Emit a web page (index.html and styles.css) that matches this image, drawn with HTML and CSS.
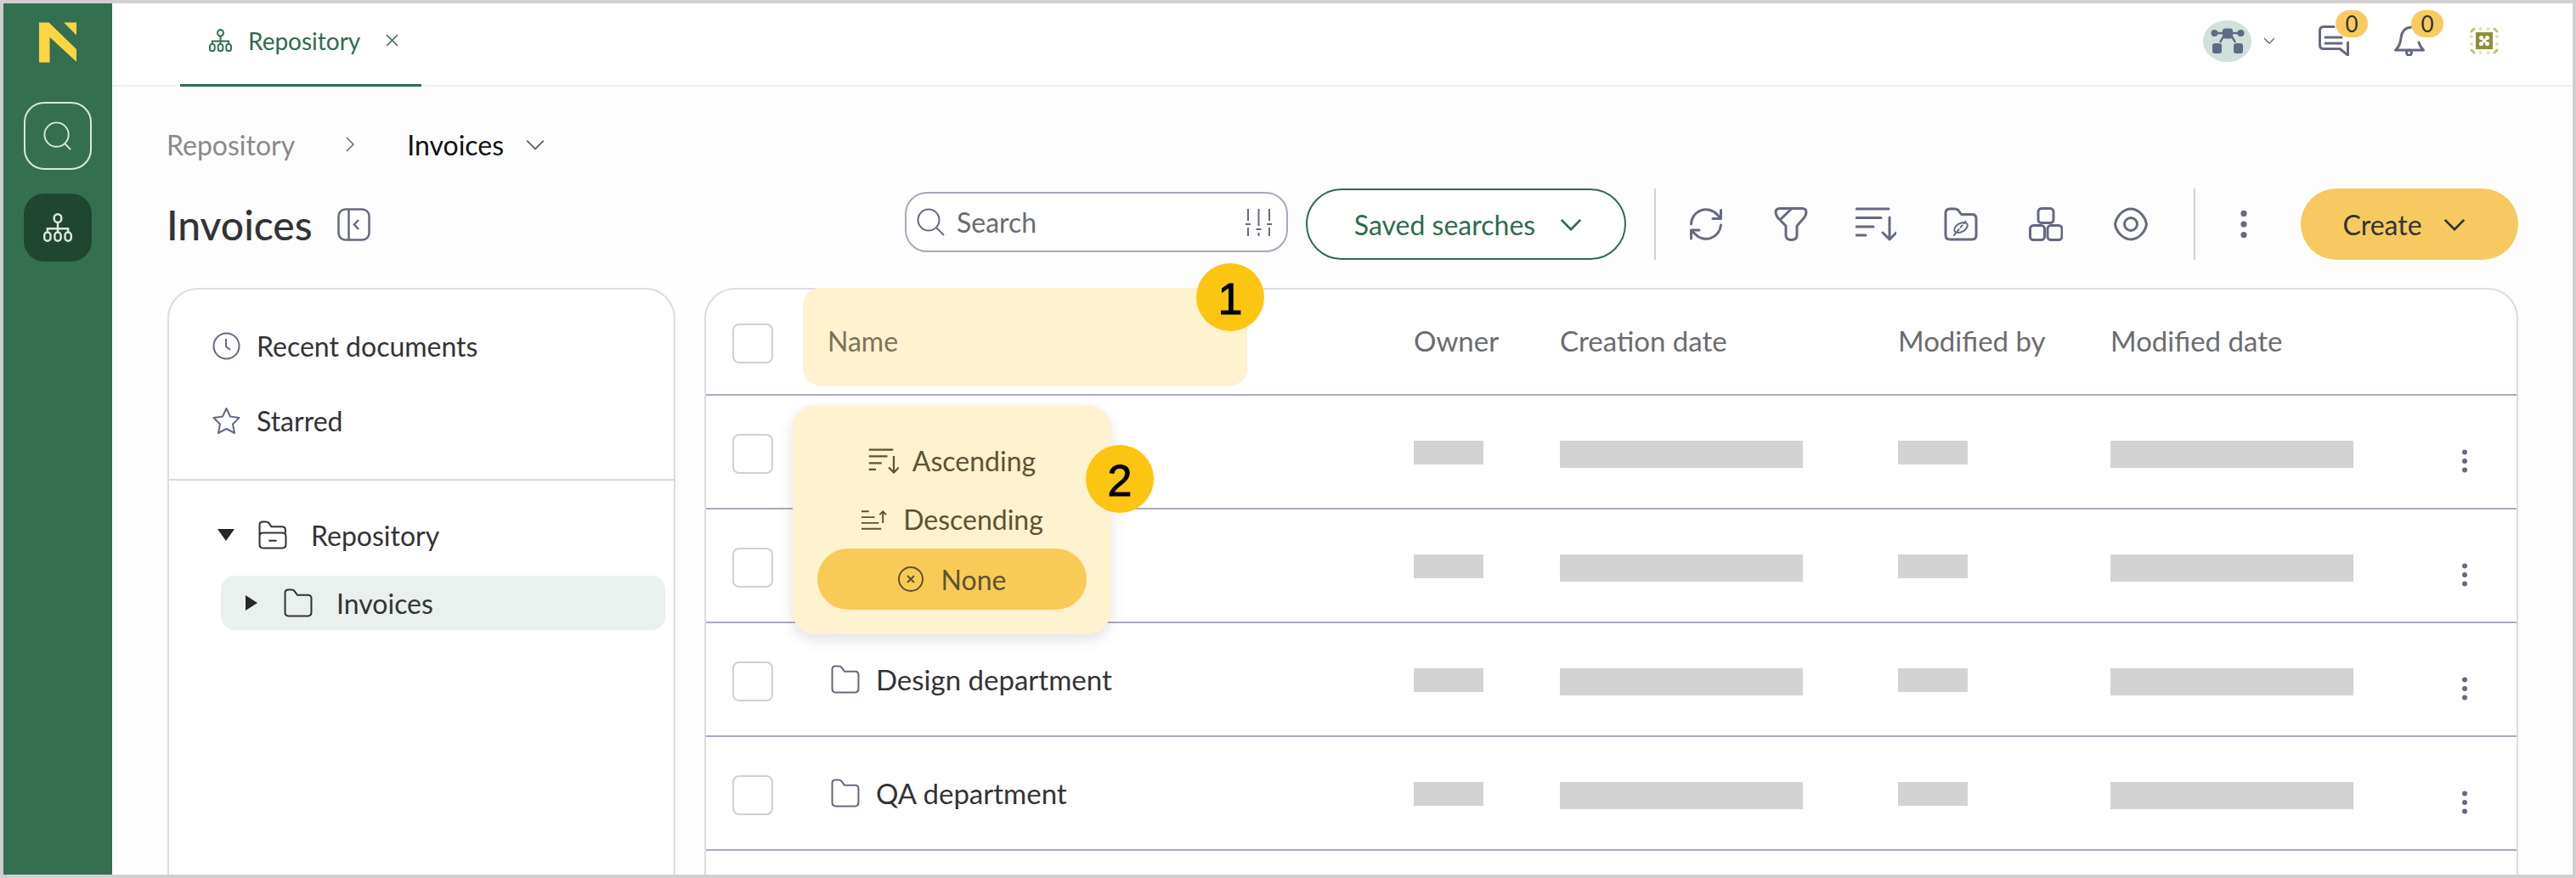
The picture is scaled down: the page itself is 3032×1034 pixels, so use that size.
FILE: index.html
```html
<!DOCTYPE html>
<html lang="en">
<head>
    <meta charset="UTF-8">
    <meta name="viewport" content="width=device-width, initial-scale=1.0">
    <title>Invoices</title>
    <link rel="stylesheet" href="styles.css">
</head>
<body>
    <svg class="sprite" aria-hidden="true">
        <symbol id="i-org" viewBox="0 0 28 28">
            <rect x="10.5" y="1" width="7" height="8" rx="3.5"/>
            <path d="M14 9V18M4 18V15H24V18"/>
            <rect x="1" y="18.5" width="6" height="8.5" rx="3"/>
            <rect x="11" y="18.5" width="6" height="8.5" rx="3"/>
            <rect x="21" y="18.5" width="6" height="8.5" rx="3"/>
        </symbol>
        <symbol id="i-chev" viewBox="0 0 28 16">
            <path d="M2 2L14 14L26 2"/>
        </symbol>
        <symbol id="i-folder" viewBox="0 0 33 33">
            <path d="M1.5 5Q1.5 1.500 5 1.500H9Q11.500 1.500 13 4L15.500 7.500H27.500Q31.500 7.500 31.500 11.500V27.500Q31.500 31.500 27.500 31.500H5.500Q1.500 31.500 1.500 27.500Z"/>
        </symbol>
        <symbol id="i-kebab" viewBox="0 0 8 28">
            <circle cx="4" cy="3.500" r="3"/>
            <circle cx="4" cy="14" r="3"/>
            <circle cx="4" cy="24.500" r="3"/>
        </symbol>
        <symbol id="i-sort" viewBox="0 0 48 40">
            <path d="M1 2H39M1 12.500H30M1 23H21M1 33H12M40 12V38M32 30L40 38L48 30"/>
        </symbol>
    </svg>

    <div class="app">
        <nav class="rail">
            <svg class="rail-logo" viewBox="47 30 133 142">
                <path d="M47 30H82L180 125V170L85 82V172H47Z"/>
                <path d="M135 30H180V75Z"/>
            </svg>
            <div class="rail-btn rail-search">
                <svg class="rail-icon" viewBox="0 0 36 36"><circle cx="16.500" cy="16.500" r="15"/><path d="M27 28L34 35"/></svg>
            </div>
            <div class="rail-btn rail-active">
                <svg class="rail-icon"><use href="#i-org"/></svg>
            </div>
        </nav>

        <div class="main">
            <header class="topbar">
                <div class="tab">
                    <svg class="tab-icon"><use href="#i-org"/></svg>
                    <span class="tab-label">Repository</span>
                    <svg class="tab-close" viewBox="0 0 15 15"><path d="M1 1L14 14M14 1L1 14"/></svg>
                </div>
                <div class="top-actions">
                    <div class="avatar">
                        <svg class="avatar-icon" viewBox="0 0 40 30">
                            <path class="avatar-line" d="M6 6H14M34 6H26M11 17L15 10M29 17L25 10"/>
                            <circle cx="4.500" cy="6" r="4"/>
                            <circle cx="35.500" cy="6" r="4"/>
                            <rect x="14" y="0.500" width="12" height="12" rx="3"/>
                            <rect x="2" y="18" width="11" height="12" rx="3"/>
                            <rect x="27" y="18" width="11" height="12" rx="3"/>
                        </svg>
                    </div>
                    <svg class="avatar-chev"><use href="#i-chev"/></svg>
                    <div class="notify notify-chat">
                        <svg class="notify-icon" viewBox="0 0 36 36">
                            <path d="M18 1.500H6Q1.500 1.500 1.500 6V23Q1.500 27.500 6 27.500H25L34.500 35V20"/>
                            <path d="M8 14H27M8 21H27"/>
                        </svg>
                        <span class="count">0</span>
                    </div>
                    <div class="notify notify-bell">
                        <svg class="notify-icon" viewBox="0 0 36 36">
                            <path d="M20 2Q9 3 8 15Q7 24 1.500 29H34.500Q30.500 25 29 20"/>
                            <circle cx="17.500" cy="32" r="3"/>
                        </svg>
                        <span class="count">0</span>
                    </div>
                    <svg class="apps-icon" viewBox="0 0 34 32">
                        <g class="apps-dots">
                            <circle cx="12.500" cy="2" r="2"/><circle cx="21.500" cy="2" r="2"/>
                            <circle cx="12.500" cy="30" r="2"/><circle cx="21.500" cy="30" r="2"/>
                            <circle cx="2" cy="11" r="2"/><circle cx="2" cy="20" r="2"/>
                            <circle cx="32" cy="11" r="2"/><circle cx="32" cy="20" r="2"/>
                        </g>
                        <path class="apps-corners" d="M2 5L5 2M29 2L32 5M2 27L5 30M29 30L32 27"/>
                        <rect class="apps-core" x="7" y="6" width="20" height="20"/>
                        <g class="apps-cut">
                            <circle cx="13.500" cy="12.500" r="2.500"/><circle cx="20.500" cy="12.500" r="2.500"/>
                            <circle cx="13.500" cy="19.500" r="2.500"/><circle cx="20.500" cy="19.500" r="2.500"/>
                            <circle cx="17" cy="16" r="2.500"/>
                        </g>
                    </svg>
                </div>
            </header>

            <div class="crumbs">
                <span class="crumb-parent">Repository</span>
                <svg class="crumb-sep" viewBox="0 0 10 18"><path d="M1 1L9 9L1 17"/></svg>
                <span class="crumb-current">Invoices</span>
                <svg class="crumb-chev"><use href="#i-chev"/></svg>
            </div>

            <div class="title-row">
                <h1>Invoices</h1>
                <svg class="collapse-icon" viewBox="0 0 39 39">
                    <rect x="1.500" y="1.500" width="36" height="36" rx="8"/>
                    <path d="M13.500 1.500V37.500M25 14L20 19.500L25 25"/>
                </svg>

                <div class="toolbar">
                    <div class="search-box">
                        <svg class="search-icon" viewBox="0 0 33 33"><circle cx="14" cy="14" r="12.500"/><path d="M23 23L32 32"/></svg>
                        <span class="search-text">Search</span>
                        <svg class="search-tune" viewBox="0 0 31 32">
                            <path d="M3 0V14M3 22V32M15.500 0V20M15.500 28V32M28 0V14M28 22V32M0 18H6M12.500 24H18.500M25 18H31"/>
                        </svg>
                    </div>
                    <button class="btn btn-outline">Saved searches<svg class="btn-chev"><use href="#i-chev"/></svg></button>
                    <span class="vsep vsep-first"></span>
                    <span class="tool">
                        <svg class="tool-svg" viewBox="0 0 40 40">
                            <path d="M2.500 20A17.500 17.500 0 0 1 33 8.500L37.500 13.500M37.500 3.500V13.500H28M37.500 21A17.500 17.500 0 0 1 7 31.500L2.500 27M2.500 37V27H12"/>
                        </svg>
                    </span>
                    <span class="tool">
                        <svg class="tool-svg" viewBox="0 0 40 40">
                            <path d="M7 1.500H33Q38 1.500 38 6Q38 9 35 13L27 22V33Q27 38.500 20.500 38.500Q14 38.500 14 33V22L5 13Q2 9 2 6Q2 1.500 7 1.500ZM21 1.500L7 15"/>
                        </svg>
                    </span>
                    <span class="tool">
                        <svg class="tool-svg tool-sort"><use href="#i-sort"/></svg>
                    </span>
                    <span class="tool">
                        <svg class="tool-svg" viewBox="0 0 40 40">
                            <path d="M2 7Q2 2 7 2H13Q16 2 18 5L20.500 8.500H33Q38 8.500 38 13.500V33Q38 38 33 38H7Q2 38 2 33Z"/>
                            <ellipse class="thin" cx="20" cy="24" rx="8.500" ry="5" transform="rotate(-30 20 24)"/>
                            <path class="thin dotted" d="M12 33L27 15"/>
                        </svg>
                    </span>
                    <span class="tool">
                        <svg class="tool-svg" viewBox="0 0 40 40">
                            <rect x="11" y="1.500" width="18" height="17" rx="4"/>
                            <rect x="1.500" y="21.500" width="17" height="17" rx="4"/>
                            <rect x="22" y="21.500" width="17" height="17" rx="4"/>
                        </svg>
                    </span>
                    <span class="tool">
                        <svg class="tool-svg" viewBox="0 0 40 40">
                            <path d="M1.500 20Q2.500 13 8 7.500Q14 2 20 2Q26 2 32 7.500Q37.500 13 38.500 20Q37.500 27 32 32.500Q26 38 20 38Q14 38 8 32.500Q2.500 27 1.500 20Z"/>
                            <circle cx="20" cy="20" r="7.500"/>
                        </svg>
                    </span>
                    <span class="vsep vsep-second"></span>
                    <svg class="tool-kebab"><use href="#i-kebab"/></svg>
                    <button class="btn btn-create">Create<svg class="btn-chev"><use href="#i-chev"/></svg></button>
                </div>
            </div>

            <div class="content">
                <aside class="tree">
                    <div class="tree-top">
                        <div class="tree-link">
                            <svg class="tree-link-icon" viewBox="0 0 33 33"><circle cx="16.500" cy="16.500" r="15"/><path d="M16 8V17L21 21"/></svg>
                            Recent documents
                        </div>
                        <div class="tree-link">
                            <svg class="tree-link-icon" viewBox="0 0 33 33"><path d="M16.500 2L21 11.500L31.500 13L24 20.500L26 31L16.500 26L7 31L9 20.500L1.500 13L12 11.500Z"/></svg>
                            Starred
                        </div>
                    </div>
                    <div class="tree-body">
                        <div class="node node-root">
                            <span class="caret-down"></span>
                            <svg class="node-icon" viewBox="0 0 33 33">
                                <path d="M1.500 27.500V5Q1.500 1.500 5 1.500H9Q11.500 1.500 13 4L15 7H27Q31 7 31 11V14M1.500 18Q1.500 14 5.500 14H27.500Q31.500 14 31.500 18V27.500Q31.500 31.500 27.500 31.500H5.500Q1.500 31.500 1.500 27.500ZM12 23H21"/>
                            </svg>
                            Repository
                        </div>
                        <div class="node node-current">
                            <span class="caret-right"></span>
                            <svg class="node-icon"><use href="#i-folder"/></svg>
                            Invoices
                        </div>
                    </div>
                </aside>

                <section class="table">
                    <div class="row row-head">
                        <span class="check"></span>
                        <span></span>
                        <span class="head-cell">Owner</span>
                        <span class="head-cell">Creation date</span>
                        <span class="head-cell">Modified by</span>
                        <span class="head-cell">Modified date</span>
                    </div>
                    <div class="row">
                        <span class="check"></span>
                        <span></span>
                        <span class="skel skel-short"></span>
                        <span class="skel skel-long"></span>
                        <span class="skel skel-short"></span>
                        <span class="skel skel-long"></span>
                        <svg class="row-menu"><use href="#i-kebab"/></svg>
                    </div>
                    <div class="row">
                        <span class="check"></span>
                        <span></span>
                        <span class="skel skel-short"></span>
                        <span class="skel skel-long"></span>
                        <span class="skel skel-short"></span>
                        <span class="skel skel-long"></span>
                        <svg class="row-menu"><use href="#i-kebab"/></svg>
                    </div>
                    <div class="row">
                        <span class="check"></span>
                        <span class="file"><svg class="file-icon"><use href="#i-folder"/></svg>Design department</span>
                        <span class="skel skel-short"></span>
                        <span class="skel skel-long"></span>
                        <span class="skel skel-short"></span>
                        <span class="skel skel-long"></span>
                        <svg class="row-menu"><use href="#i-kebab"/></svg>
                    </div>
                    <div class="row">
                        <span class="check"></span>
                        <span class="file"><svg class="file-icon"><use href="#i-folder"/></svg>QA department</span>
                        <span class="skel skel-short"></span>
                        <span class="skel skel-long"></span>
                        <span class="skel skel-short"></span>
                        <span class="skel skel-long"></span>
                        <svg class="row-menu"><use href="#i-kebab"/></svg>
                    </div>

                    <div class="name-highlight">Name</div>
                    <span class="step step-one">1</span>

                    <div class="sort-menu">
                        <div class="sort-item">
                            <svg class="sort-up-icon"><use href="#i-sort"/></svg>
                            Ascending
                        </div>
                        <div class="sort-item">
                            <svg class="sort-down-icon" viewBox="0 0 32 24">
                                <path d="M1 2H10M1 9H17M1 16H22M1 23H25M27 16V2M23 6L27 2L31 6"/>
                            </svg>
                            Descending
                        </div>
                        <div class="sort-item sort-none">
                            <svg class="sort-none-icon" viewBox="0 0 30 30"><circle cx="15" cy="15" r="14"/><path d="M11 11L19 19M19 11L11 19"/></svg>
                            None
                        </div>
                    </div>
                    <span class="step step-two">2</span>
                </section>
            </div>
        </div>
    </div>
</body>
</html>
```

FILE: styles.css
```css
* {
    box-sizing: border-box;
}

html, body {
    margin: 0;
    height: 100%;
}

body {
    font-family: Lato, "Open Sans", sans-serif;
    color: #333336;
    overflow: hidden;
}

svg {
    display: block;
    flex: none;
}

.sprite {
    display: none;
}

.app {
    display: flex;
    height: 1034px;
    border: 4px solid #d0d0d0;
    overflow: hidden;
    background-color: #fdfdfd;
}

/* left rail */
.rail {
    flex: none;
    width: 128px;
    background-color: #356f52;
    display: flex;
    flex-direction: column;
    align-items: center;
    padding-top: 22px;
}

.rail-logo {
    width: 44px;
    height: 48px;
    margin-bottom: 46px;
    fill: #fbd540;
}

.rail-btn {
    width: 80px;
    height: 80px;
    border-radius: 24px;
    display: flex;
    justify-content: center;
    align-items: center;
    margin-bottom: 28px;
}

.rail-search {
    border: 2px solid #dbe8e1;
}

.rail-active {
    background-color: #1f4630;
}

.rail-icon {
    width: 34px;
    height: 34px;
    fill: none;
    stroke: #dbe8e1;
    stroke-width: 2;
}

/* top bar */
.main {
    flex: 1;
    min-width: 0;
    display: flex;
    flex-direction: column;
}

.topbar {
    flex: none;
    height: 98px;
    background-color: #fff;
    border-bottom: 2px solid #efeff1;
    display: flex;
    padding-left: 80px;
}

.tab {
    width: 284px;
    height: 98px;
    padding: 0 0 8px 34px;
    display: flex;
    align-items: center;
    border-bottom: 3px solid #2f6b50;
    color: #2f6b50;
    font-size: 28px;
}

.tab-icon {
    width: 27px;
    height: 27px;
    fill: none;
    stroke: #2f6b50;
    stroke-width: 2;
    margin-right: 19px;
}

.tab-close {
    width: 15px;
    height: 15px;
    margin-left: 30px;
    fill: none;
    stroke: #2f6b50;
    stroke-width: 1.500;
}

.top-actions {
    margin-left: auto;
    display: flex;
    align-items: center;
    padding: 0 87px 8px 0;
}

.avatar {
    width: 57px;
    height: 49px;
    border-radius: 50%;
    background-color: #d2e0db;
    display: flex;
    justify-content: center;
    align-items: center;
}

.avatar-icon {
    width: 40px;
    height: 30px;
    fill: #5f6b85;
}

.avatar-line {
    fill: none;
    stroke: #5f6b85;
    stroke-width: 2.500;
}

.avatar-chev {
    width: 14px;
    height: 8px;
    margin: 0 51px 0 14px;
    fill: none;
    stroke: #5f6270;
    stroke-width: 2.500;
    overflow: visible;
}

.notify {
    position: relative;
    width: 36px;
    height: 36px;
}

.notify-bell {
    margin: 0 53px;
}

.notify-icon {
    width: 36px;
    height: 36px;
    fill: none;
    stroke: #666a80;
    stroke-width: 3;
    stroke-linecap: round;
    stroke-linejoin: round;
}

.count {
    position: absolute;
    top: -18px;
    left: 20px;
    width: 38px;
    height: 32px;
    border-radius: 16px;
    background-color: #f9cb5f;
    color: #333;
    font-size: 26px;
    line-height: 32px;
    text-align: center;
}

.apps-icon {
    width: 34px;
    height: 32px;
}

.apps-dots {
    fill: #e0e4b4;
}

.apps-corners {
    fill: none;
    stroke: #bcc56f;
    stroke-width: 3;
    stroke-linecap: round;
}

.apps-core {
    fill: #8e8f3c;
}

.apps-cut {
    fill: #fff;
}

/* breadcrumb */
.crumbs {
    flex: none;
    height: 36px;
    margin: 50px 0 34px;
    padding-left: 64px;
    display: flex;
    align-items: center;
    font-size: 32px;
}

.crumb-parent {
    color: #8a8a8c;
}

.crumb-sep {
    width: 10px;
    height: 18px;
    margin: 0 62px 0 60px;
    fill: none;
    stroke: #5f6270;
    stroke-width: 1.500;
}

.crumb-current {
    color: #111;
}

.crumb-chev {
    width: 24px;
    height: 13px;
    margin-left: 25px;
    fill: none;
    stroke: #5f6270;
    stroke-width: 2.500;
}

/* title and toolbar */
.title-row {
    flex: none;
    height: 84px;
    margin-bottom: 33px;
    padding: 0 64px 0 64px;
    display: flex;
    align-items: center;
}

h1 {
    margin: 0;
    font-size: 48px;
    font-weight: 500;
    color: #333336;
}

.collapse-icon {
    width: 39px;
    height: 39px;
    margin-left: 29px;
    fill: none;
    stroke: #666a80;
    stroke-width: 2.500;
}

.toolbar {
    margin-left: auto;
    display: flex;
    align-items: center;
}

.search-box {
    width: 451px;
    height: 71px;
    margin: 0 21px 5px 0;
    padding: 0 17px 0 12px;
    display: flex;
    align-items: center;
    border: 2px solid #a9a9bc;
    border-radius: 26px;
    background-color: #fff;
    font-size: 32px;
    color: #6c6c70;
}

.search-icon {
    width: 33px;
    height: 33px;
    margin-right: 14px;
    fill: none;
    stroke: #666a80;
    stroke-width: 2;
}

.search-tune {
    width: 31px;
    height: 32px;
    margin-left: auto;
    fill: none;
    stroke: #666a80;
    stroke-width: 2;
}

.btn {
    height: 84px;
    border-radius: 42px;
    display: flex;
    align-items: center;
    justify-content: center;
    font-family: inherit;
    font-size: 32px;
    cursor: pointer;
}

.btn-chev {
    width: 28px;
    height: 15px;
    margin-left: 28px;
    fill: none;
    stroke: currentColor;
    stroke-width: 3;
}

.btn-outline {
    width: 377px;
    padding-left: 12px;
    border: 2px solid #2f6b50;
    background-color: #fff;
    color: #2f6b50;
}

.btn-create {
    width: 256px;
    padding-right: 18px;
    border: none;
    background-color: #f6ca60;
    color: #333;
}

.btn-create .btn-chev {
    margin-left: 24px;
}

.vsep {
    width: 2px;
    height: 84px;
    background-color: #d0d0d4;
}

.vsep-first {
    margin: 0 9px 0 33px;
}

.vsep-second {
    margin-left: 24px;
}

.tool {
    width: 100px;
    display: flex;
    justify-content: center;
}

.tool-svg {
    width: 40px;
    height: 40px;
    fill: none;
    stroke: #666a80;
    stroke-width: 3;
    stroke-linecap: round;
    stroke-linejoin: round;
}

.tool-sort {
    width: 48px;
}

.thin {
    stroke-width: 2;
}

.dotted {
    stroke-dasharray: 3 3;
}

.tool-kebab {
    width: 8px;
    height: 28px;
    margin: 0 63px 0 53px;
    fill: #666a80;
    transform: scale(1.200);
}

/* panels */
.content {
    flex: 1;
    min-height: 0;
    padding: 0 64px 0 65px;
    display: flex;
    gap: 34px;
}

.tree {
    flex: none;
    width: 598px;
    height: 760px;
    background-color: #fff;
    border: 2px solid #dcdce2;
    border-radius: 36px;
    font-size: 32px;
}

.tree-top {
    height: 225px;
    padding-top: 22px;
    border-bottom: 2px solid #d8d8de;
}

.tree-link {
    height: 88px;
    padding-left: 51px;
    display: flex;
    align-items: center;
}

.tree-link-icon {
    width: 33px;
    height: 33px;
    margin-right: 19px;
    fill: none;
    stroke: #666a80;
    stroke-width: 2;
    stroke-linejoin: round;
}

.tree-body {
    padding: 32px 10px 0 61px;
}

.node {
    height: 64px;
    display: flex;
    align-items: center;
}

.node-root {
    margin-bottom: 16px;
}

.node-current {
    padding-left: 29px;
    border-radius: 16px;
    background-color: #e9f0ed;
}

.caret-down {
    width: 0;
    height: 0;
    margin: 0 28px 0 -4px;
    border-left: 10px solid transparent;
    border-right: 10px solid transparent;
    border-top: 14px solid #27272a;
}

.caret-right {
    width: 0;
    height: 0;
    margin-right: 31px;
    border-top: 9px solid transparent;
    border-bottom: 9px solid transparent;
    border-left: 14px solid #27272a;
}

.node-icon {
    width: 34px;
    height: 34px;
    margin-right: 28px;
    fill: none;
    stroke: #333336;
    stroke-width: 2;
}

/* table */
.table {
    position: relative;
    flex: 1;
    min-width: 0;
    height: 760px;
    background-color: #fff;
    border: 2px solid #dcdce2;
    border-radius: 36px;
}

.row {
    display: grid;
    grid-template-columns: 116px 686px 172px 398px 250px 413px 8px;
    align-items: start;
    height: 134px;
    padding-left: 31px;
    border-bottom: 2px solid #a9a9c0;
}

.row-head {
    height: 125px;
    color: #6c6c70;
    font-size: 33px;
}

.head-cell {
    margin-top: 40px;
}

.check {
    width: 48px;
    height: 47px;
    margin-top: 45px;
    border: 2px solid #d0d0d4;
    border-radius: 8px;
    background-color: #fff;
}

.row-head .check {
    margin-top: 40px;
}

.file {
    display: flex;
    align-items: center;
    height: 40px;
    margin-top: 46px;
    font-size: 33px;
}

.file-icon {
    width: 34px;
    height: 34px;
    margin-right: 19px;
    fill: none;
    stroke: #666a80;
    stroke-width: 2;
}

.skel {
    margin-top: 53px;
    background-color: #d3d3d3;
}

.skel-short {
    width: 82px;
    height: 28px;
}

.skel-long {
    width: 286px;
    height: 32px;
}

.row-menu {
    width: 8px;
    height: 28px;
    margin-top: 63px;
    fill: #666a80;
}

/* tutorial overlays */
.name-highlight {
    position: absolute;
    top: -2px;
    left: 114px;
    width: 523px;
    height: 115px;
    padding-left: 29px;
    border-radius: 20px;
    background-color: #fff2cf;
    color: #7d7355;
    font-size: 32px;
    line-height: 126px;
}

.step {
    position: absolute;
    width: 80px;
    height: 80px;
    border-radius: 50%;
    background-color: #fcc511;
    color: #000;
    font-family: "Liberation Sans", Arial, sans-serif;
    font-size: 52px;
    line-height: 84px;
    text-align: center;
    -webkit-text-stroke: 1px #000;
}

.step-one {
    top: -31px;
    left: 577px;
}

.step-two {
    top: 183px;
    left: 447px;
}

.sort-menu {
    position: absolute;
    top: 136px;
    left: 102px;
    width: 374px;
    height: 270px;
    padding: 31px 28px 29px 29px;
    border-radius: 26px;
    background-color: #fff2cf;
    box-shadow: 0 6px 16px rgba(90, 90, 110, 0.18);
    color: #5e5232;
    font-size: 32px;
}

.sort-item {
    height: 69px;
    display: flex;
    justify-content: center;
    align-items: center;
}

.sort-none {
    height: 72px;
    border-radius: 36px;
    background-color: #f8cb57;
}

.sort-up-icon {
    width: 36px;
    height: 30px;
    margin-right: 16px;
    fill: none;
    stroke: #5e5232;
    stroke-width: 3;
}

.sort-down-icon {
    width: 31px;
    height: 24px;
    margin-right: 19px;
    fill: none;
    stroke: #5e5232;
    stroke-width: 2;
}

.sort-none-icon {
    width: 30px;
    height: 30px;
    margin-right: 21px;
    fill: none;
    stroke: #5e5232;
    stroke-width: 2;
}
```
